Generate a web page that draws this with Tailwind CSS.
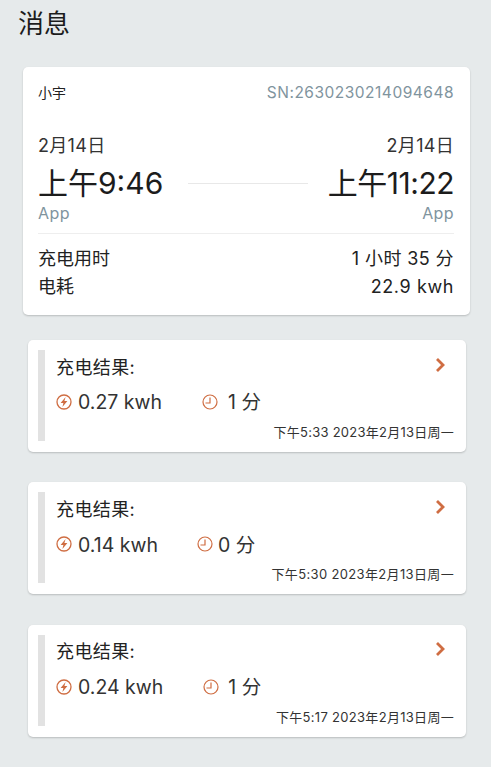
<!DOCTYPE html>
<html lang="zh">

<head>
    <meta charset="UTF-8">
    <meta name="viewport" content="width=device-width, initial-scale=1.0">
    <title>消息</title>
    <script src="https://cdn.jsdelivr.net/npm/@tailwindcss/browser@4"></script>
</head>

<body class="bg-[#e6eaeb] font-[Inter,'Noto_Sans_CJK_SC',sans-serif] text-[#222] h-[767px] overflow-hidden">
    <h1 class="pl-[18px] pt-[8px] h-[67px] text-[26px] leading-[32px] font-normal text-[#1c1c1c]">消息</h1>

    <!-- summary -->
    <div class="ml-[23px] mr-[21px] h-[248px] bg-white rounded-[5px] shadow-[0_1px_2px_rgba(0,0,0,0.2)] px-[15px] pr-[16px]">
        <div class="flex justify-between items-center pt-[12px] h-[39px]">
            <span class="text-[14px]">小宇</span>
            <span class="text-[15.5px] tracking-[0.5px] text-[#7f949e]">SN:2630230214094648</span>
        </div>
        <div class="flex justify-between mt-[28px] text-[18px] leading-[24px] tracking-[0.3px] text-[#333]">
            <span>2月14日</span>
            <span>2月14日</span>
        </div>
        <div class="flex justify-between items-center mt-[5px] text-[30px] leading-[40px] text-[#1c1c1c]">
            <span>上午9:46</span>
            <span class="w-[120px] h-px bg-[#e8e8e8] ml-[5px]"></span>
            <span class="tracking-[-0.5px]">上午11:22</span>
        </div>
        <div class="flex justify-between text-[16px] leading-[20px] text-[#7f949e] tracking-[0.4px]">
            <span>App</span>
            <span>App</span>
        </div>
        <div class="border-t border-[#eeeeee] mt-[10px] pt-[11px] text-[18px] leading-[28px]">
            <div class="flex justify-between"><span>充电用时</span><span class="tracking-[0.4px]">1 小时 35 分</span></div>
            <div class="flex justify-between"><span>电耗</span><span class="tracking-[0.6px]">22.9 kwh</span></div>
        </div>
    </div>

    <!-- results -->
    <div class="ml-[28px] mr-[25px] mt-[25px] flex flex-col gap-[30.4px]">
        <div class="h-[112px] bg-white rounded-[5px] shadow-[0_1px_2px_rgba(0,0,0,0.2)] p-[10px] flex">
            <div class="w-[7px] h-[91px] bg-[#e2e2e2]"></div>
            <div class="flex-1 pl-[11px] pr-[2px] flex flex-col">
                <div class="flex justify-between items-center h-[30px] mt-[2px] text-[18px]">
                    <span class="tracking-[0.4px]">充电结果:</span>
                    <svg width="11" height="16" viewBox="0 0 11 16" fill="none" stroke="#cf6d42" stroke-width="2.8" class="mr-[8px] -mt-[5px]"><path d="M2 2l6 6-6 6"/></svg>
                </div>
                <div class="flex items-center h-[32px] mt-[5px] text-[19.5px] text-[#333]">
                    <svg width="16" height="16" viewBox="0 0 16 16" class="mr-[6px] -mt-[2px]"><circle cx="8" cy="8" r="7" fill="none" stroke="#cf6d42" stroke-width="1.3"/><path d="M9.6 3L4.6 9h2.8l-1 4L11.4 7H8.4z" fill="#cf6d42"/></svg>
                    <span>0.27 kwh</span>
                    <svg width="16" height="16" viewBox="0 0 16 16" fill="none" stroke="#cf6d42" stroke-width="1.2" class="ml-[40px] mr-[10px] -mt-[2px]"><circle cx="8" cy="8" r="7"/><path d="M8 3.5V9H3.5"/></svg>
                    <span>1 分</span>
                </div>
                <div class="text-right text-[13px] leading-[18px] mt-[4px] tracking-[0.25px] text-[#333]">下午5:33 2023年2月13日周一</div>
            </div>
        </div>

        <div class="h-[112px] bg-white rounded-[5px] shadow-[0_1px_2px_rgba(0,0,0,0.2)] p-[10px] flex">
            <div class="w-[7px] h-[91px] bg-[#e2e2e2]"></div>
            <div class="flex-1 pl-[11px] pr-[2px] flex flex-col">
                <div class="flex justify-between items-center h-[30px] mt-[2px] text-[18px]">
                    <span class="tracking-[0.4px]">充电结果:</span>
                    <svg width="11" height="16" viewBox="0 0 11 16" fill="none" stroke="#cf6d42" stroke-width="2.8" class="mr-[8px] -mt-[5px]"><path d="M2 2l6 6-6 6"/></svg>
                </div>
                <div class="flex items-center h-[32px] mt-[5px] text-[19.5px] text-[#333]">
                    <svg width="16" height="16" viewBox="0 0 16 16" class="mr-[6px] -mt-[2px]"><circle cx="8" cy="8" r="7" fill="none" stroke="#cf6d42" stroke-width="1.3"/><path d="M9.6 3L4.6 9h2.8l-1 4L11.4 7H8.4z" fill="#cf6d42"/></svg>
                    <span>0.14 kwh</span>
                    <svg width="16" height="16" viewBox="0 0 16 16" fill="none" stroke="#cf6d42" stroke-width="1.2" class="ml-[39px] mr-[5px] -mt-[2px]"><circle cx="8" cy="8" r="7"/><path d="M8 3.5V9H3.5"/></svg>
                    <span>0 分</span>
                </div>
                <div class="text-right text-[13px] leading-[18px] mt-[4px] tracking-[0.35px] text-[#333]">下午5:30 2023年2月13日周一</div>
            </div>
        </div>

        <div class="h-[112px] bg-white rounded-[5px] shadow-[0_1px_2px_rgba(0,0,0,0.2)] p-[10px] flex">
            <div class="w-[7px] h-[91px] bg-[#e2e2e2]"></div>
            <div class="flex-1 pl-[11px] pr-[2px] flex flex-col">
                <div class="flex justify-between items-center h-[30px] mt-[2px] text-[18px]">
                    <span class="tracking-[0.4px]">充电结果:</span>
                    <svg width="11" height="16" viewBox="0 0 11 16" fill="none" stroke="#cf6d42" stroke-width="2.8" class="mr-[8px] -mt-[5px]"><path d="M2 2l6 6-6 6"/></svg>
                </div>
                <div class="flex items-center h-[32px] mt-[5px] text-[19.5px] text-[#333]">
                    <svg width="16" height="16" viewBox="0 0 16 16" class="mr-[6px] -mt-[2px]"><circle cx="8" cy="8" r="7" fill="none" stroke="#cf6d42" stroke-width="1.3"/><path d="M9.6 3L4.6 9h2.8l-1 4L11.4 7H8.4z" fill="#cf6d42"/></svg>
                    <span>0.24 kwh</span>
                    <svg width="16" height="16" viewBox="0 0 16 16" fill="none" stroke="#cf6d42" stroke-width="1.2" class="ml-[40px] mr-[9px] -mt-[2px]"><circle cx="8" cy="8" r="7"/><path d="M8 3.5V9H3.5"/></svg>
                    <span>1 分</span>
                </div>
                <div class="text-right text-[13px] leading-[18px] mt-[4px] tracking-[0.3px] text-[#333]">下午5:17 2023年2月13日周一</div>
            </div>
        </div>
    </div>
</body>

</html>
